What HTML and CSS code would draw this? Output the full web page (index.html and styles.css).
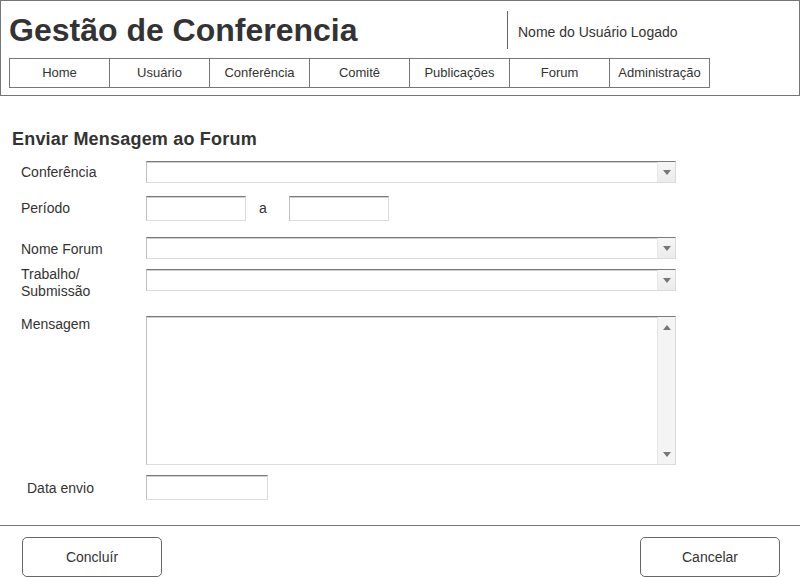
FILE: index.html
```html
<!DOCTYPE html>
<html lang="pt">
<head>
<meta charset="utf-8">
<title>Gestão de Conferencia</title>
<link rel="stylesheet" href="styles.css">
</head>
<body>
<header class="header">
  <div class="top">
    <h1 class="title">Gestão de Conferencia</h1>
    <div class="user">Nome do Usuário Logado</div>
  </div>
  <nav class="nav">
    <a class="nav-item">Home</a>
    <a class="nav-item">Usuário</a>
    <a class="nav-item">Conferência</a>
    <a class="nav-item">Comitê</a>
    <a class="nav-item">Publicações</a>
    <a class="nav-item">Forum</a>
    <a class="nav-item">Administração</a>
  </nav>
</header>
<main class="content">
  <h2 class="heading">Enviar Mensagem ao Forum</h2>
  <div class="form">
    <div class="row r1">
      <span class="label">Conferência</span>
      <div class="field select"><span class="arrow"><svg width="8" height="5" viewBox="0 0 8 5"><path d="M0 0H8L4 5Z" fill="#777"/></svg></span></div>
    </div>
    <div class="row r2">
      <span class="label">Período</span>
      <div class="field input w100"></div>
      <span class="sep">a</span>
      <div class="field input w100"></div>
    </div>
    <div class="row r3">
      <span class="label">Nome Forum</span>
      <div class="field select"><span class="arrow"><svg width="8" height="5" viewBox="0 0 8 5"><path d="M0 0H8L4 5Z" fill="#777"/></svg></span></div>
    </div>
    <div class="row r4">
      <span class="label two">Trabalho/<br>Submissão</span>
      <div class="field select offset"><span class="arrow"><svg width="8" height="5" viewBox="0 0 8 5"><path d="M0 0H8L4 5Z" fill="#777"/></svg></span></div>
    </div>
    <div class="row r5">
      <span class="label">Mensagem</span>
      <div class="field textarea">
        <span class="scroll">
          <svg width="8" height="5" viewBox="0 0 8 5"><path d="M0 5H8L4 0Z" fill="#777"/></svg>
          <svg width="8" height="5" viewBox="0 0 8 5"><path d="M0 0H8L4 5Z" fill="#777"/></svg>
        </span>
      </div>
    </div>
    <div class="row r6">
      <span class="label indent">Data envio</span>
      <div class="field input w122"></div>
    </div>
  </div>
</main>
<footer class="footer">
  <button class="btn">Concluír</button>
  <button class="btn">Cancelar</button>
</footer>
</body>
</html>
```
FILE: styles.css
```css
html, body {
  margin: 0;
  padding: 0;
  overflow: hidden;
  background: #fff;
}
body {
  font-family: "Liberation Sans", Arial, sans-serif;
  color: #333;
  width: 800px;
  height: 577px;
}
.header {
  box-sizing: border-box;
  height: 96px;
  border: 1px solid #777;
  padding-left: 8px;
}
.top {
  height: 57px;
  display: flex;
}
.title {
  margin: 11px 0 0 0;
  width: 498px;
  font-size: 32px;
  line-height: 36px;
  font-weight: 700;
  color: #333;
}
.user {
  box-sizing: border-box;
  margin-top: 10px;
  height: 38px;
  border-left: 1px solid #666;
  padding: 3px 0 0 10px;
  display: flex;
  align-items: center;
  font-size: 14px;
  line-height: 16px;
}
.nav {
  display: grid;
  grid-template-columns: 99px repeat(6, 100px);
  width: 701px;
  box-sizing: border-box;
  border: 1px solid #777;
}
.nav-item {
  box-sizing: border-box;
  height: 28px;
  line-height: 28px;
  text-align: center;
  font-size: 13px;
  color: #333;
}
.nav-item + .nav-item {
  border-left: 1px solid #777;
}
.content {
  height: 404px;
  box-sizing: border-box;
  padding-top: 32px;
}
.heading {
  margin: 0;
  padding-left: 12px;
  font-size: 18px;
  line-height: 22px;
  font-weight: 700;
  letter-spacing: 0.2px;
  color: #333;
}
.form {
  margin-top: 11px;
  padding-left: 21px;
}
.row {
  display: flex;
  align-items: flex-start;
}
.label {
  box-sizing: border-box;
  width: 125px;
  flex: none;
  font-size: 14px;
  line-height: 16px;
  padding-top: 4px;
}
.r1 .label { padding-top: 3px; }
.r2 { margin-top: 13px; }
.r3 { margin-top: 16px; }
.r4 { margin-top: 7px; }
.r5 { margin-top: 16px; }
.r6 { margin-top: 10px; }
.label.two {
  line-height: 17px;
  padding-top: 0;
}
.r5 .label { padding-top: 0; }
.label.indent {
  padding-left: 6px;
  padding-top: 5px;
}
.field {
  box-sizing: border-box;
  position: relative;
  background: #fff;
  border: 1px solid #dcdcdc;
  border-top-color: #7a7a7a;
  border-left-color: #c0c0c0;
  box-shadow: inset 0 1px 0 #cfcfcf;
}
.select {
  width: 530px;
  height: 22px;
  display: flex;
  justify-content: flex-end;
}
.select.offset { margin-top: 3px; }
.arrow {
  width: 18px;
  height: 100%;
  box-sizing: border-box;
  border-left: 1px solid #e8e8e8;
  background: linear-gradient(#f6f6f6, #ececec);
  display: flex;
  align-items: center;
  justify-content: center;
}
.input {
  height: 25px;
}
.w100 { width: 100px; }
.w122 { width: 122px; }
.sep {
  font-size: 14px;
  line-height: 16px;
  padding-top: 4px;
  margin: 0 22px 0 13px;
}
.textarea {
  width: 530px;
  height: 149px;
  display: flex;
  justify-content: flex-end;
}
.scroll {
  width: 18px;
  box-sizing: border-box;
  border-left: 1px solid #e6e6e6;
  background: #f4f4f4;
  display: flex;
  flex-direction: column;
  align-items: center;
  justify-content: space-between;
  padding: 8px 0 7px;
}
.footer {
  margin-top: 25px;
  border-top: 1px solid #777;
  padding: 11px 20px 0 22px;
  display: flex;
  justify-content: space-between;
}
.btn {
  width: 140px;
  height: 40px;
  box-sizing: border-box;
  border: 1px solid #666;
  border-radius: 5px;
  background: #fff;
  font-family: "Liberation Sans", Arial, sans-serif;
  font-size: 14px;
  color: #333;
  padding: 0;
}
```
